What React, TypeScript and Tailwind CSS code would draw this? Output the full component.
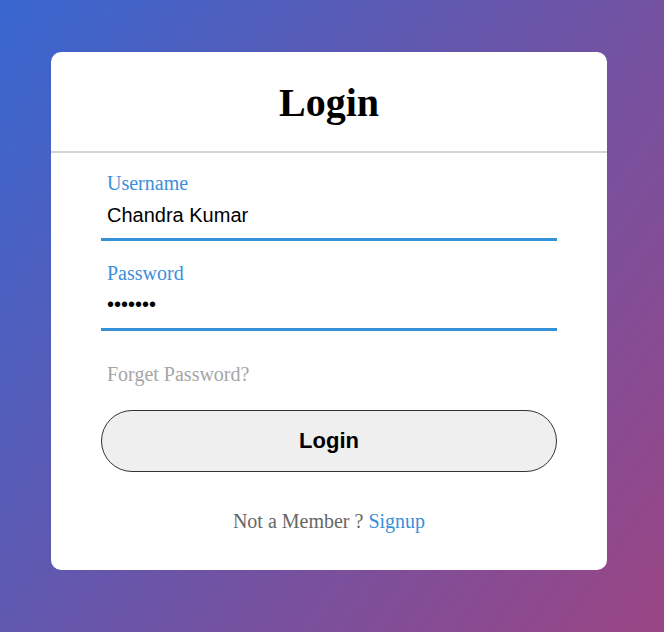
import React from "react";

export default function App() {
  return (
    <div
      className="w-[664px] h-[632px] overflow-hidden pt-[52px] pl-[51px]"
      style={{ background: "linear-gradient(125deg, #3867d0 0%, #6a55a8 50%, #9a4584 100%)" }}
    >
      <div className="w-[556px] h-[518px] bg-white rounded-[10px] flex flex-col">
        <div className="h-[101px] border-b-2 border-[#d4d4d4] flex items-center justify-center pt-[2px]">
          <h1 className="text-[40px] font-bold text-black leading-none" style={{ fontFamily: '"Liberation Serif", serif' }}>
            Login
          </h1>
        </div>
        <div className="px-[50px] pt-[19px] flex flex-col" style={{ fontFamily: '"Liberation Serif", serif' }}>
          <div className="flex flex-col border-b-[3px] border-[#3592d8]">
            <label className="pl-[6px] text-[20px] leading-[22px] text-[#3b8fd9]">Username</label>
            <input
              readOnly
              value="Chandra Kumar"
              className="h-[44px] pl-[6px] pb-[2px] text-[20px] text-black bg-transparent outline-none"
              style={{ fontFamily: '"Liberation Sans", Arial, sans-serif' }}
            />
          </div>
          <div className="mt-[21px] flex flex-col border-b-[3px] border-[#3592d8]">
            <label className="pl-[6px] text-[20px] leading-[22px] text-[#3b8fd9]">Password</label>
            <input
              readOnly
              type="password"
              value="1234567"
              className="h-[44px] pl-[6px] pb-[3px] text-[20px] text-black bg-transparent outline-none"
              style={{ fontFamily: '"Liberation Sans", Arial, sans-serif' }}
            />
          </div>
          <div className="mt-[32px] pl-[6px] text-[20px] leading-[22px] text-[#a6a6a6]">Forget Password?</div>
          <button
            className="mt-[25px] h-[62px] w-full rounded-full border border-[#333] bg-[#efefef] text-[22px] font-bold text-black pb-[2px]"
            style={{ fontFamily: '"Liberation Sans", Arial, sans-serif' }}
          >
            Login
          </button>
          <div className="mt-[38px] text-center text-[20px] leading-[22px] text-[#666]">
            Not a Member ? <span className="text-[#3b8fd9]">Signup</span>
          </div>
        </div>
      </div>
    </div>
  );
}
